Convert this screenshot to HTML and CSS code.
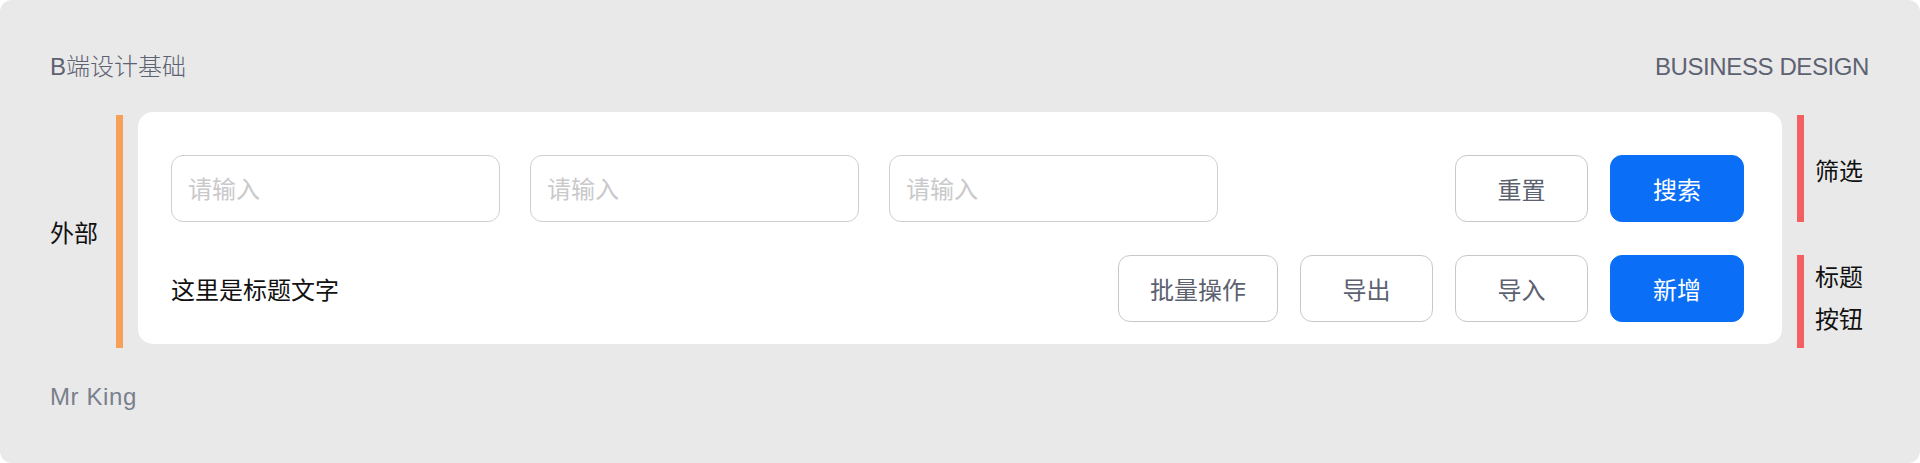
FILE: index.html
```html
<!DOCTYPE html>
<html lang="zh-CN">
<head>
<meta charset="utf-8">
<title>B端设计基础</title>
<link rel="stylesheet" href="styles.css">
</head>
<body>
<div class="board">
  <header class="board-head">
    <span class="head-title">B端设计基础</span>
    <span class="head-en">BUSINESS DESIGN</span>
  </header>

  <section class="stage">
    <div class="side side-left">
      <span class="side-label">外部</span>
      <span class="bar bar-orange"></span>
    </div>

    <div class="card">
      <div class="row">
        <div class="inputs">
          <input class="field" type="text" placeholder="请输入">
          <input class="field" type="text" placeholder="请输入">
          <input class="field" type="text" placeholder="请输入">
        </div>
        <div class="actions">
          <button class="btn">重置</button>
          <button class="btn btn-primary">搜索</button>
        </div>
      </div>
      <div class="row">
        <div class="row-title">这里是标题文字</div>
        <div class="actions">
          <button class="btn btn-wide">批量操作</button>
          <button class="btn">导出</button>
          <button class="btn">导入</button>
          <button class="btn btn-primary">新增</button>
        </div>
      </div>
    </div>

    <div class="side-right">
      <div class="note note-filter">
        <span class="bar bar-red"></span>
        <span class="note-text">筛选</span>
      </div>
      <div class="note note-title">
        <span class="bar bar-red"></span>
        <span class="note-text">标题<br>按钮</span>
      </div>
    </div>
  </section>

  <footer class="board-foot">Mr King</footer>
</div>
</body>
</html>
```

FILE: styles.css
```css
* { box-sizing: border-box; }

html, body {
  margin: 0;
  padding: 0;
  background: #ffffff;
}

body {
  font-family: "Liberation Sans", "Noto Sans CJK SC", sans-serif;
  font-size: 24px;
}

.board {
  width: 1920px;
  height: 463px;
  background: #e9e9e9;
  border-radius: 12px;
  padding-top: 50px;
  overflow: hidden;
}

.board-head {
  display: flex;
  justify-content: space-between;
  align-items: center;
  height: 34px;
  line-height: 34px;
  padding: 0 51px 0 50px;
  color: #5d6272;
}

.head-title {
  font-weight: 300;
}

.head-en {
  font-size: 24px;
  letter-spacing: -0.4px;
}

.stage {
  display: flex;
  align-items: flex-start;
  margin-top: 28px;
  padding: 0 57px 0 50px;
  height: 236px;
}

.side {
  display: flex;
  align-items: center;
  margin-top: 3px;
  height: 233px;
}

.side-label {
  width: 48px;
  margin-right: 18px;
  color: #111111;
  font-family: "Noto Sans CJK SC", sans-serif;
  line-height: 34px;
}

.bar {
  display: block;
  width: 7px;
  align-self: stretch;
}

.bar-orange { background: #f7a05a; }
.bar-red { background: #f45f61; }

.card {
  flex: 1;
  margin-left: 15px;
  margin-right: 15px;
  height: 232px;
  background: #ffffff;
  border-radius: 15px;
  padding: 43px 38px 22px 33px;
  display: flex;
  flex-direction: column;
  gap: 33px;
}

.row {
  display: flex;
  align-items: center;
  height: 67px;
}

.inputs {
  display: flex;
  gap: 30px;
  height: 100%;
}

.field {
  width: 329px;
  height: 67px;
  border: 1px solid #cfcfd1;
  border-radius: 12px;
  padding: 0 16px 2px;
  font-family: "Noto Sans CJK SC", sans-serif;
  font-size: 24px;
  color: #333333;
  background: #ffffff;
  outline: none;
}

.field::placeholder { color: #c9c9cb; }

.actions {
  display: flex;
  gap: 22px;
  margin-left: auto;
  height: 100%;
}

.btn {
  width: 133px;
  height: 67px;
  border: 1px solid #c7c8cc;
  border-radius: 12px;
  background: #ffffff;
  color: #5c6170;
  font-family: "Noto Sans CJK SC", sans-serif;
  font-size: 24px;
  padding: 0;
  cursor: pointer;
}

.btn-wide { width: 160px; }

.btn-primary {
  width: 134px;
  background: #0a6ff6;
  border-color: #0a6ff6;
  color: #ffffff;
}

.row-title {
  color: #111111;
  font-family: "Noto Sans CJK SC", sans-serif;
  line-height: 34px;
}

.side-right {
  display: flex;
  flex-direction: column;
  gap: 33px;
  margin-top: 3px;
  width: 66px;
}

.note {
  display: flex;
}

.note-filter {
  height: 107px;
  align-items: center;
}

.note-title {
  height: 93px;
  align-items: flex-start;
}

.note-text {
  margin-left: 11px;
  color: #111111;
  font-family: "Noto Sans CJK SC", sans-serif;
  line-height: 42px;
  white-space: nowrap;
}

.note-filter .note-text { margin-top: 2px; }

.board-foot {
  margin-top: 32px;
  padding-left: 50px;
  height: 34px;
  line-height: 34px;
  color: #7a7f8d;
  letter-spacing: 0.6px;
}
```
